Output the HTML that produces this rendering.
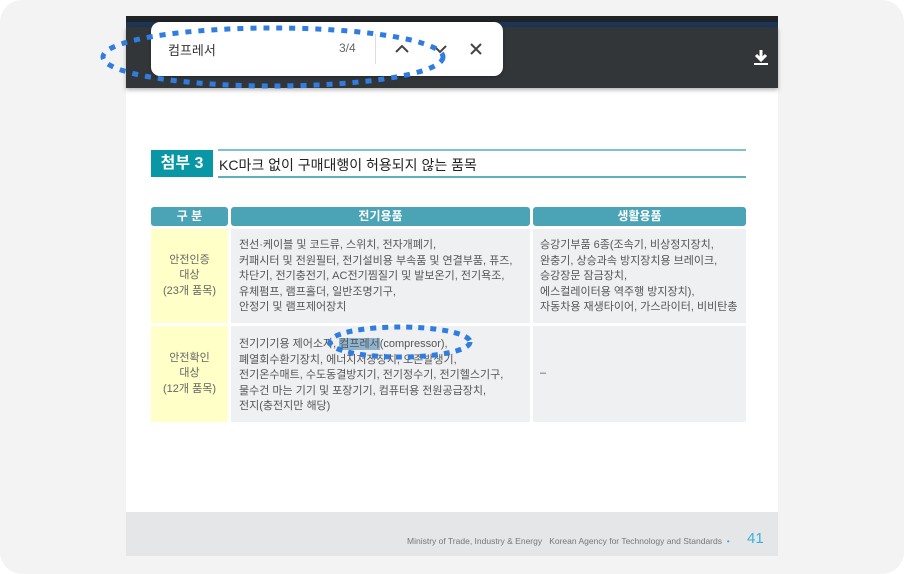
<!DOCTYPE html>
<html><head><meta charset="utf-8"><style>
*{margin:0;padding:0;box-sizing:border-box}
body{width:904px;height:574px;background:#fff;position:relative;overflow:hidden;font-family:"Liberation Sans","Noto Sans CJK KR",sans-serif}
.card{position:absolute;left:0;top:0;width:904px;height:574px;background:#f3f3f3;border-radius:22px}
.viewer{position:absolute;left:126px;top:16px;width:652px;height:540px;background:#fff}
.nav0{position:absolute;left:0;top:0;width:652px;height:6px;background:#202326}
.nav{position:absolute;left:0;top:6px;width:652px;height:5px;background:#1d3557}
.tb{position:absolute;left:0;top:11px;width:652px;height:61px;background:#323639;box-shadow:0 2px 4px rgba(0,0,0,.3)}
.find{position:absolute;left:151px;top:22px;width:352px;height:54px;background:#fff;border-radius:9px;box-shadow:0 1px 3px rgba(0,0,0,.3)}
.abs{position:absolute}
.foot{position:absolute;left:126px;top:512px;width:652px;height:44px;background:#e5e6e8}
.tt{position:absolute;left:151px;top:150px;width:62px;height:27px;background:#0997a6;color:#fff;font-weight:bold;font-size:16px;text-align:center;line-height:27px}
.cell{position:absolute;font-size:11px;line-height:15.5px;color:#555}
.hd{position:absolute;top:207px;height:19px;background:#4ba3b6;color:#fff;font-weight:bold;font-size:12px;text-align:center;line-height:19px;border-radius:3px}
.y{background:#ffffc8;text-align:center;color:#666;display:flex;align-items:center;justify-content:center}
.g{background:#eff0f2;padding-left:8px}
</style></head><body>
<div class="card"></div>
<div class="viewer"><div class="nav0"></div><div class="nav"></div><div class="tb"></div></div>
<svg class="abs" style="left:751px;top:48px" width="20" height="20" viewBox="0 0 20 20"><path d="M10 2v9M5 7l5 5 5-5" stroke="#fff" stroke-width="3" fill="none"/><rect x="3" y="15" width="14" height="2" fill="#fff"/></svg>
<div class="find"></div>
<div class="abs" style="left:168px;top:40px;font-size:13px;color:#333">컴프레서</div>
<div class="abs" style="left:339px;top:41px;font-size:12px;color:#666">3/4</div>
<div class="abs" style="left:375px;top:34px;width:1px;height:30px;background:#ddd"></div>
<svg class="abs" style="left:392px;top:40px" width="20" height="18"><path d="M4 12l6-6 6 6" stroke="#444" stroke-width="2" fill="none"/></svg>
<svg class="abs" style="left:430px;top:40px" width="20" height="18"><path d="M4 6l6 6 6-6" stroke="#444" stroke-width="2" fill="none"/></svg>
<svg class="abs" style="left:467px;top:40px" width="18" height="18"><path d="M4 4l10 10M14 4L4 14" stroke="#444" stroke-width="2"/></svg>
<div class="tt">첨부 3</div>
<div class="abs" style="left:218px;top:149px;width:528px;height:2px;background:#7cc5cf"></div>
<div class="abs" style="left:218px;top:176px;width:528px;height:2px;background:#5fb0bb"></div>
<div class="abs" style="left:219px;top:155px;font-size:14px;color:#222">KC마크 없이 구매대행이 허용되지 않는 품목</div>
<div class="hd" style="left:151px;width:77px">구 분</div>
<div class="hd" style="left:231px;width:299px">전기용품</div>
<div class="hd" style="left:533px;width:213px">생활용품</div>
<div class="cell y" style="left:151px;top:229px;width:77px;height:94px">안전인증<br>대상<br>(23개 품목)</div>
<div class="cell g" style="left:231px;top:229px;width:299px;height:94px;padding-top:9px">전선·케이블 및 코드류, 스위치, 전자개폐기,<br>커패시터 및 전원필터, 전기설비용 부속품 및 연결부품, 퓨즈,<br>차단기, 전기충전기, AC전기찜질기 및 발보온기, 전기욕조,<br>유체펌프, 램프홀더, 일반조명기구,<br>안정기 및 램프제어장치</div>
<div class="cell g" style="left:533px;top:229px;width:213px;height:94px;padding-top:9px;padding-left:7px">승강기부품 6종(조속기, 비상정지장치,<br>완충기, 상승과속 방지장치용 브레이크,<br>승강장문 잠금장치,<br>에스컬레이터용 역주행 방지장치),<br>자동차용 재생타이어, 가스라이터, 비비탄총</div>
<div class="cell y" style="left:151px;top:326px;width:77px;height:96px">안전확인<br>대상<br>(12개 품목)</div>
<div class="cell g" style="left:231px;top:326px;width:299px;height:96px;padding-top:11px">전기기기용 제어소자, <span style="background:#8fb4cf">컴프레서</span>(compressor),<br>폐열회수환기장치, 에너지저장장치, 오존발생기,<br>전기온수매트, 수도동결방지기, 전기정수기, 전기헬스기구,<br>물수건 마는 기기 및 포장기기, 컴퓨터용 전원공급장치,<br>전지(충전지만 해당)</div>
<div class="cell g" style="left:533px;top:326px;width:213px;height:96px;padding-top:40px;padding-left:7px">–</div>
<div class="foot"></div>
<div class="abs" style="left:407px;top:536px;font-size:8.5px;color:#777">Ministry of Trade, Industry &amp; Energy &nbsp; Korean Agency for Technology and Standards &nbsp;<span style="color:#3bb0e0">•</span></div>
<div class="abs" style="left:747px;top:530px;font-size:15px;color:#3bb0e0">41</div>
<svg class="abs" style="left:0;top:0" width="904" height="574"><ellipse cx="273" cy="57" rx="170" ry="29" fill="none" stroke="#2f7de1" stroke-width="5" stroke-dasharray="6 7"/><ellipse cx="400" cy="342" rx="70" ry="15" fill="none" stroke="#2f7de1" stroke-width="5" stroke-dasharray="6 6"/></svg>
</body></html>
